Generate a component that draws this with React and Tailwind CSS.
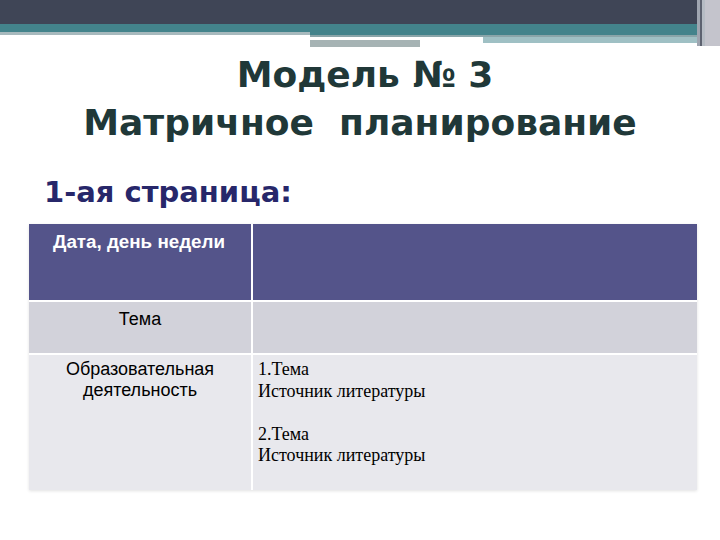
import React from 'react';

export default function App() {
  return (
    <div className="w-[720px] h-[540px] bg-white overflow-hidden flex flex-col">
      {/* Top decorative band */}
      <div className="flex">
        <div className="flex-1 flex flex-col">
          <div className="h-[24px] bg-[#3f4556]" />
          <div className="flex">
            <div className="w-[310px] flex flex-col">
              <div className="h-[8px] bg-[#43838b]" />
              <div className="h-[3px] bg-[#a7b9bd]" />
            </div>
            <div className="flex-1 flex flex-col">
              <div className="h-[11px] bg-[#43838b]" />
              <div className="h-[2px] bg-[#8aa5a9]" />
              <div className="flex">
                <div className="w-[173px] flex flex-col">
                  <div className="h-[3px] bg-white" />
                  <div className="flex">
                    <div className="w-[110px] h-[7px] bg-[#a6b3b4]" />
                  </div>
                </div>
                <div className="flex-1 h-[6px] bg-[#9fc0c4]" />
              </div>
            </div>
          </div>
        </div>
        <div className="w-[23px] flex">
          <div className="w-[3px] h-[46px] bg-[#9fa5b0]" />
          <div className="w-[2px] h-[46px] bg-[#5d6270]" />
          <div className="w-[3px] h-[46px] bg-[#b6bcc4]" />
          <div className="flex-1 h-[46px] bg-[#c4c4cc]" />
        </div>
      </div>

      {/* Title */}
      <div className="mt-[4px] text-center text-[#203838] font-bold text-[36px] leading-[48px]" style={{ fontFamily: '"DejaVu Sans", Verdana, sans-serif' }}>
        <div className="pl-[10px]">Модель № 3</div>
        <div className="whitespace-pre">Матричное  планирование</div>
      </div>

      <div className="mt-[27px] pl-[44px] text-[#27276a] font-bold text-[29px] leading-[36px]" style={{ fontFamily: '"DejaVu Sans", Verdana, sans-serif' }}>
        1-ая страница:
      </div>

      {/* Table */}
      <div className="mt-[14px] ml-[29px] w-[668px] grid grid-cols-[222px_1fr] grid-rows-[76px_51px_135px] gap-[2px] bg-white shadow-[0_1px_3px_rgba(0,0,0,0.12)]" style={{ fontFamily: '"Liberation Sans", Arial, sans-serif' }}>
        <div className="bg-[#54548a] pl-[24px] pt-[7px] text-white font-bold text-[18.8px] leading-[22px]">Дата, день недели</div>
        <div className="bg-[#54548a]" />
        <div className="bg-[#d2d2da] pt-[6px] text-center text-[18px] leading-[22px] text-black">Тема</div>
        <div className="bg-[#d2d2da]" />
        <div className="bg-[#e8e8ed] pt-[4px] text-center text-[18px] leading-[21px] text-black">
          <div>Образовательная</div>
          <div>деятельность</div>
        </div>
        <div className="bg-[#e8e8ed] pl-[5px] pt-[4px] text-[18px] leading-[21.5px] text-black" style={{ fontFamily: '"Liberation Serif", "Times New Roman", serif' }}>
          <div>1.Тема</div>
          <div>Источник литературы</div>
          <div className="h-[21.5px]" />
          <div>2.Тема</div>
          <div>Источник литературы</div>
        </div>
      </div>
    </div>
  );
}
